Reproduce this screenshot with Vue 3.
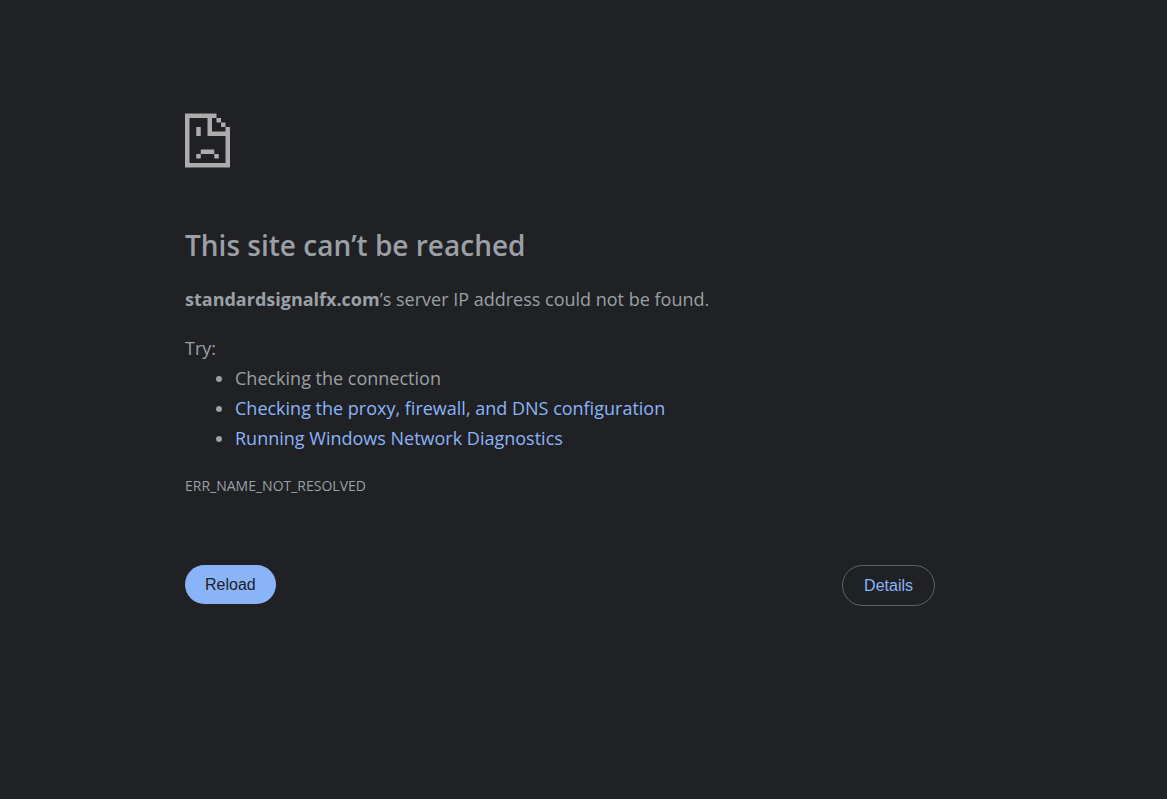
<script setup>
const suggestions = [
  { text: 'Checking the connection' },
  { text: 'Checking the proxy, firewall, and DNS configuration', href: '#proxy' },
  { text: 'Running Windows Network Diagnostics', href: '#diagnostics' },
]
</script>

<template>
  <div class="page">
    <main class="content">
      <svg class="icon" viewBox="0 0 20 24" aria-hidden="true">
        <path d="M0 0H14V2H12V8H18V6H20V24H0ZM2 2V22H18V10H10V2Z" fill-rule="evenodd" />
        <path d="M14 2H16V4H14ZM16 4H18V6H16Z" />
        <path d="M5 6H7V10H5ZM7 16H13V18H7ZM5 18H7V20H5ZM13 18H15V20H13Z" />
      </svg>
      <h1>This site can’t be reached</h1>
      <p class="summary"><strong>standardsignalfx.com</strong>’s server IP address could not be found.</p>
      <p class="try">Try:</p>
      <ul>
        <li v-for="item in suggestions" :key="item.text">
          <a v-if="item.href" :href="item.href">{{ item.text }}</a>
          <template v-else>{{ item.text }}</template>
        </li>
      </ul>
      <p class="code">ERR_NAME_NOT_RESOLVED</p>
      <div class="actions">
        <button type="button" class="reload">Reload</button>
        <button type="button" class="details">Details</button>
      </div>
    </main>
  </div>
</template>

<style>
body {
  margin: 0;
  background: #202124;
}
</style>

<style scoped>
.page {
  padding: 113px 47px 48px 0;
  color: #9aa0a6;
  font-family: "Segoe UI", "Open Sans", "Noto Sans", sans-serif;
  font-size: 18px;
  line-height: 30px;
}
.content {
  max-width: 750px;
  margin: 0 auto;
}
.icon {
  display: block;
  width: 45px;
  height: 55px;
  fill: #acacac;
}
h1 {
  margin: 59px 0 21px;
  font-size: 28px;
  font-weight: 600;
  line-height: 36px;
}
p {
  margin: 0;
}
.try {
  margin-top: 19px;
}
ul {
  margin: 0;
  padding-left: 50px;
}
a {
  color: #8ab4f8;
  text-decoration: none;
}
.code {
  margin-top: 18px;
  font-size: 14px;
}
.actions {
  display: flex;
  justify-content: space-between;
  align-items: flex-start;
  margin-top: 64px;
}
button {
  padding: 10px 20px;
  border: 0;
  border-radius: 20px;
  font-family: Arial, "Liberation Sans", sans-serif;
  font-size: 16px;
  line-height: 19px;
  cursor: pointer;
}
.reload {
  background: #8ab4f8;
  color: #202124;
}
.details {
  padding: 10px 21px;
  border: 1px solid #5f6368;
  border-radius: 21px;
  background: transparent;
  color: #8ab4f8;
}
</style>
